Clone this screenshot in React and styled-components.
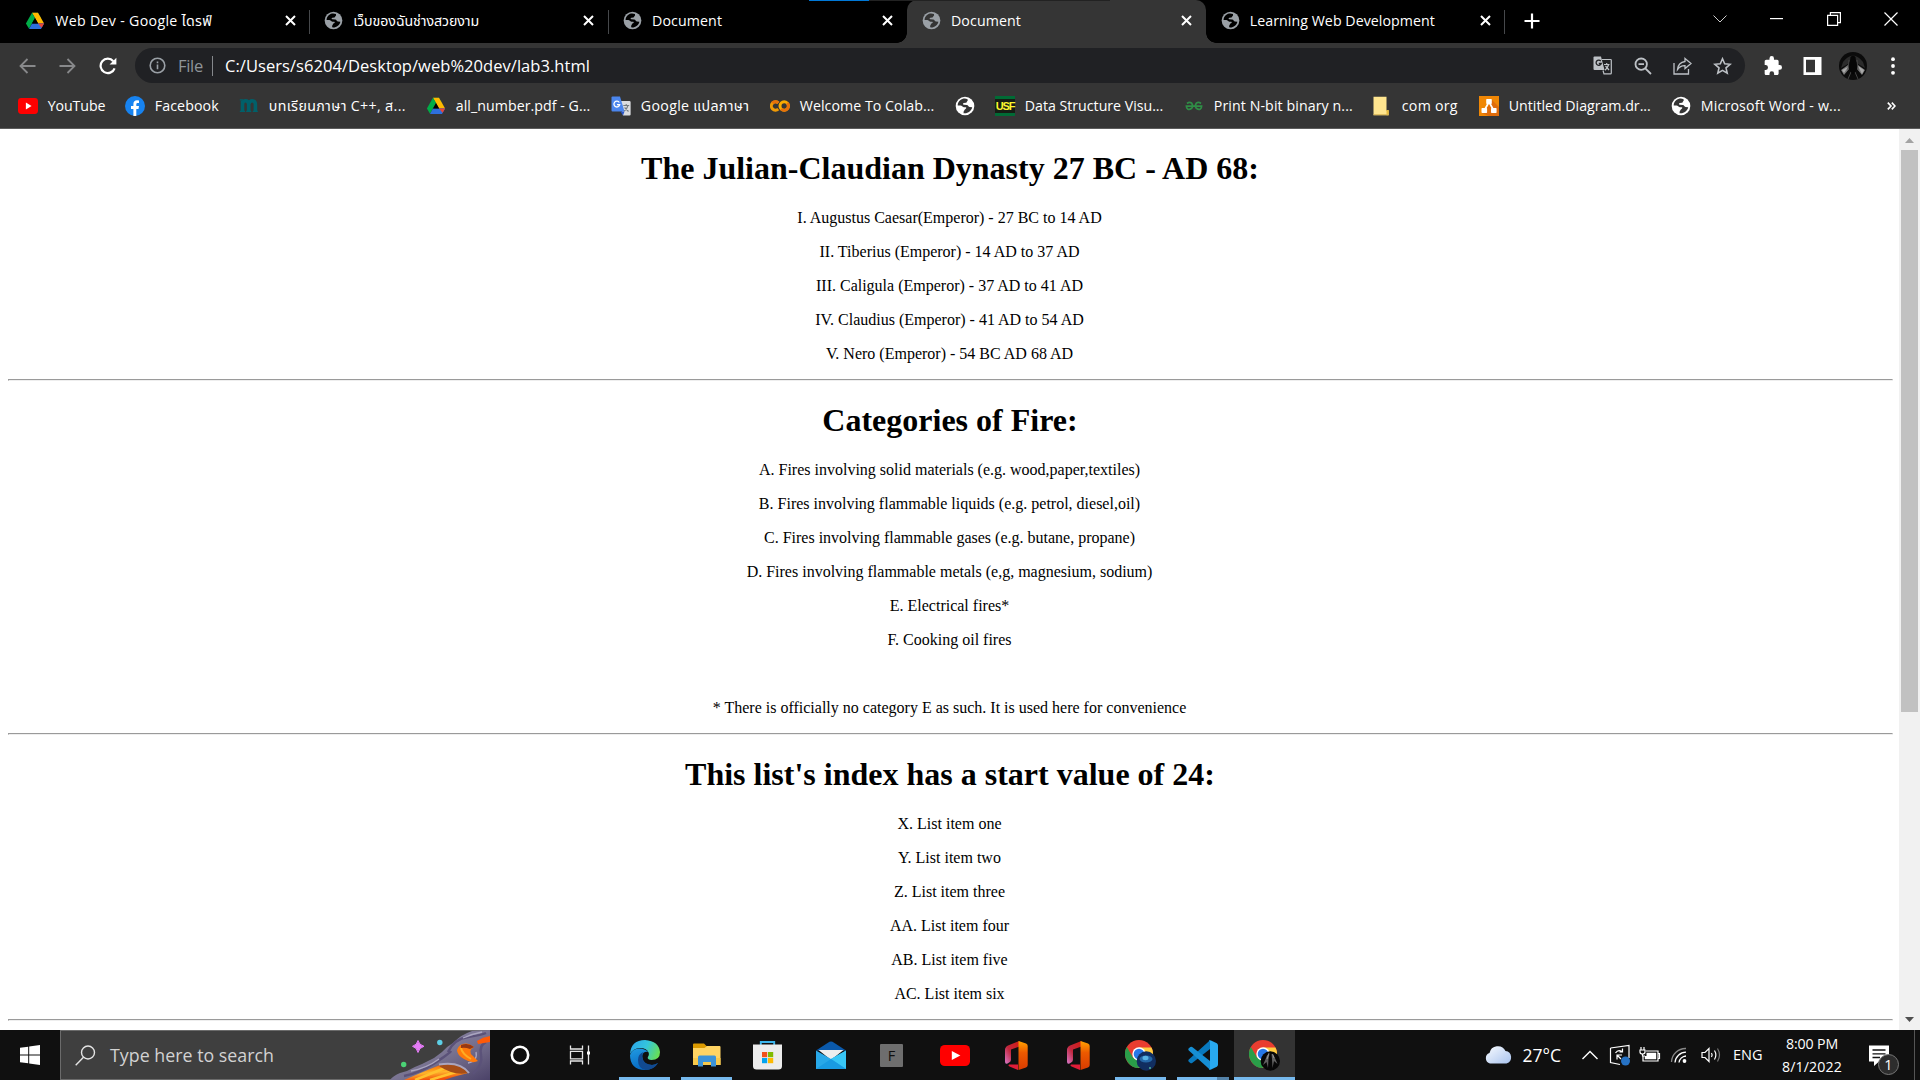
import React, { useLayoutEffect, useRef } from "react";
import styled, { createGlobalStyle, css } from "styled-components";

const GlobalStyle = createGlobalStyle`
  html, body { margin: 0; padding: 0; height: 1080px; overflow: hidden; background: #fff; }
  svg { display: block; flex: none; }
`;

const uiFont = `"Open Sans", "Noto Sans", "Noto Sans Thai", sans-serif`;

const Screen = styled.div`
  width: 1920px;
  height: 1080px;
  display: flex;
  flex-direction: column;
  overflow: hidden;
  font-family: ${uiFont};
  color: #fff;
`;

/* ---------- text with a set line length ---------- */
const LabelText = styled.span`
  display: inline-block;
  flex: none;
  white-space: nowrap;
  font-size: ${(p) => p.$size || 14.2}px;
  color: ${(p) => p.$color || "#fff"};
  line-height: 20px;
`;

function Label({ w, size, color, children }) {
  const ref = useRef(null);
  useLayoutEffect(() => {
    const el = ref.current;
    el.style.letterSpacing = "0px";
    const base = el.getBoundingClientRect().width;
    el.style.letterSpacing = "1px";
    const slope = el.getBoundingClientRect().width - base;
    el.style.letterSpacing = slope > 0 ? `${(w - base) / slope}px` : "0px";
  }, [w, children]);
  return (
    <LabelText ref={ref} $size={size} $color={color}>
      {children}
    </LabelText>
  );
}

/* ---------- icons ---------- */
const Globe = ({ size = 19, color = "#9aa0a6", cut = "#000" }) => (
  <svg width={size} height={size} viewBox="0 0 20 20">
    <circle cx="10" cy="10" r="9.3" fill={color} />
    <path
      d="M8.6 2.6C5 3.4 2.8 6.300 2.700 9.500L5.500 9.600C7 9.800 7.300 11 8.800 11.200L10.800 11.300C11.600 11.500 11.400 12.600 10.500 12.900C9.400 13.200 9.500 14.500 8.700 15.200L8.500 17.200C12.800 17.800 16.600 14.800 17.200 11.200L14.500 11C13.200 10.600 13.400 9 11.800 8.900L8.800 8.800C7.700 8.600 7.800 7.300 8.900 7.100L11 6.800C12 6.300 11.700 5.200 12.700 4.700L12.600 3.200C11.300 2.600 9.900 2.400 8.600 2.600Z"
      fill={cut}
    />
  </svg>
);

const Drive = () => (
  <svg width="20" height="20" viewBox="0 0 20 20">
    <path d="M7 1.800H13L16 7L10 7Z" fill="#188038" />
    <path d="M10 1.800H13L19.100 12.400H13.100L7 1.800Z" fill="#ffba00" />
    <path d="M0.900 12.500L7 1.800L10 7L4 17.800Z" fill="#00ac47" />
    <path d="M7 12.400H19.100L16 17.900H4Z" fill="#2d6fdd" />
    <path d="M13 12.400H19.100L16.600 16.800Z" fill="#ea4335" />
    <path d="M10 7L7 12.400H13.100Z" fill="#000" />
  </svg>
);

const YouTube = ({ w = 20, h = 16 }) => (
  <svg width={w} height={h} viewBox="0 0 28 21" preserveAspectRatio="none">
    <rect width="28" height="21" rx="4.500" fill="#f00" />
    <path d="M11 6L19 10.500L11 15Z" fill="#fff" />
  </svg>
);

const Facebook = () => (
  <svg width="20" height="20" viewBox="0 0 20 20">
    <circle cx="10" cy="10" r="10" fill="#1783f0" />
    <path d="M8.400 20V13H6V10H8.400V8C8.400 5.400 9.900 4.200 12 4.200L14 4.400V6.900H12.800C11.600 6.900 11.300 7.500 11.300 8.300V10H14L13.500 13H11.300V20Z" fill="#fff" />
  </svg>
);

const LetterM = () => (
  <svg width="20" height="20" viewBox="0 0 20 20" fill="none" stroke="#00606a" strokeWidth="3.600">
    <path d="M3.500 16V4.500M3.300 8Q4 4.800 6.600 4.800T9.700 8V16M9.700 8Q10.600 4.800 13.300 4.800T16.400 8V16" />
    <path d="M0.800 15.400H6M7.200 15.400H12.200M13.800 15.400H18.800M0.800 3.800H4" strokeWidth="1.300" />
  </svg>
);

const Translate = () => (
  <svg width="20" height="20" viewBox="0 0 20 20">
    <path d="M8 5H18.500Q19.600 5 19.600 6V18.500Q19.600 19.600 18.500 19.600H12Z" fill="#dadce0" />
    <path d="M1.500 0.600H9L13.500 15.600H1.500Q0.500 15.600 0.500 14.600V1.600Q0.500 0.600 1.500 0.600Z" fill="#4b86ee" />
    <path d="M9.500 15.600H13.500L12 19.600Z" fill="#2a56c6" />
    <path d="M8.300 6.500A2.900 2.900 0 1 0 8.700 8.600H6" fill="none" stroke="#fff" strokeWidth="1.300" />
    <path d="M12.300 9.500H18.200M15.200 8V9.500M17 9.500Q16 13 13.300 15M13.600 11.500L17.500 15.500" fill="none" stroke="#737b80" strokeWidth="1.100" />
  </svg>
);

const Colab = () => (
  <svg width="20" height="20" viewBox="0 0 20 20" fill="none" strokeWidth="3">
    <path d="M8.300 6.800A4.200 4.200 0 1 0 8.300 13.200" stroke="#f09a05" />
    <path d="M2.300 7A4.200 4.200 0 0 1 8.300 6.800" stroke="#e8710a" />
    <circle cx="14.200" cy="10" r="4.200" stroke="#f9ab00" />
    <path d="M11.200 13A4.200 4.200 0 0 0 17.200 7" stroke="#e8710a" />
  </svg>
);

const UsfBox = styled.div`
  width: 20px;
  height: 20px;
  flex: none;
  box-sizing: border-box;
  border: solid #006b35;
  border-width: 3px 0;
  background: #161d14;
  color: #fdf52f;
  display: flex;
  align-items: center;
  justify-content: center;
  font: bold 11px/14px "Liberation Sans Narrow", "Liberation Sans", sans-serif;
  letter-spacing: -1.2px;
`;

const Gfg = () => (
  <svg width="20" height="20" viewBox="0 0 20 20" fill="none" stroke="#2f8d46" strokeWidth="1.700">
    <path d="M3 7.500Q5.500 5.600 7.700 7.200Q9.400 9.500 8 11.900Q6 14.200 3.600 12.900Q2.500 12 2.400 10.200H17.600Q17.500 12 16.400 12.900Q14 14.200 12 11.900Q10.600 9.500 12.300 7.200Q14.500 5.600 17 7.500" />
  </svg>
);

const BookmarkFolder = () => (
  <svg width="20" height="20" viewBox="0 0 20 20">
    <path d="M1.500 0.800H14.500V14.500H16.500V19.200H1.500Z" fill="#ffe58f" />
    <path d="M14.500 14H16.800V19.200H14.500Z" fill="#e7bb3f" />
    <path d="M1.500 18.700H16.500" stroke="#d8b557" />
  </svg>
);

const Diagram = () => (
  <svg width="20" height="20" viewBox="0 0 20 20">
    <rect width="20" height="20" fill="#f08705" />
    <path d="M13 4L20 11V20H10L2.500 17L10 9Z" fill="#df6c0c" />
    <path d="M10 6L5.500 14M10 6L14.500 14" stroke="#fff" strokeWidth="1.700" />
    <rect x="7.200" y="3" width="5.600" height="5" rx="0.700" fill="#fff" />
    <rect x="2.500" y="12" width="5.600" height="5" rx="0.700" fill="#fff" />
    <rect x="12" y="12" width="5.600" height="5" rx="0.700" fill="#fff" />
  </svg>
);

/* ---------- tab strip ---------- */
const TabStrip = styled.div`
  position: relative;
  height: 43px;
  flex: none;
  background: #000;
  display: flex;
  padding-left: 10px;
`;

const TopProgress = styled.div`
  position: absolute;
  left: 809px;
  top: 0;
  width: 301px;
  height: 1px;
  background: linear-gradient(90deg, #0078d7 60px, #222 60px);
`;

const Tab = styled.div`
  position: relative;
  box-sizing: border-box;
  width: 298.900px;
  height: 43px;
  padding: 0 12px 2px 15px;
  display: flex;
  align-items: center;
  gap: 10.300px;
  ${(p) =>
    p.$divider &&
    css`
      &::before {
        content: "";
        position: absolute;
        right: -1px;
        top: 10px;
        width: 1px;
        height: 24px;
        background: #46484b;
      }
    `}
  ${(p) =>
    p.$active &&
    css`
      background: #353535;
      border-radius: 10px 10px 0 0;
      &::before,
      &::after {
        content: "";
        position: absolute;
        bottom: 0;
        width: 10px;
        height: 10px;
      }
      &::before {
        left: -10px;
        background: radial-gradient(circle at 0 0, transparent 9.500px, #353535 10px);
      }
      &::after {
        right: -10px;
        background: radial-gradient(circle at 100% 0, transparent 9.500px, #353535 10px);
      }
    `}
`;

const TabClose = styled.div`
  margin-left: auto;
  padding-right: 1.300px;
`;

const CloseGlyph = () => (
  <svg width="11" height="11" viewBox="0 0 11 11" stroke="#fff" strokeWidth="2">
    <path d="M1 1L10 10M10 1L1 10" />
  </svg>
);

const NewTab = styled.div`
  width: 56px;
  display: flex;
  align-items: center;
  justify-content: center;
  padding-bottom: 1px;
`;

const WindowButtons = styled.div`
  margin-left: auto;
  display: grid;
  grid-template-columns: 57px 57px 57px 58px;
  height: 37px;
  align-items: center;
  justify-items: center;
`;

const tabs = [
  { title: "Web Dev - Google ไดรฟ์", w: 157, drive: true },
  { title: "เว็บของฉันช่างสวยงาม", w: 126, divider: true },
  { title: "Document", w: 70 },
  { title: "Document", w: 70, active: true },
  { title: "Learning Web Development", w: 185, divider: true },
];

function Tabs() {
  return (
    <TabStrip>
      {tabs.map((t, i) => (
        <Tab key={i} $active={t.active} $divider={t.divider || i === 0}>
          {t.drive ? <Drive /> : <Globe cut={t.active ? "#353535" : "#000"} />}
          <Label w={t.w}>{t.title}</Label>
          <TabClose>
            <CloseGlyph />
          </TabClose>
        </Tab>
      ))}
      <NewTab>
        <svg width="16" height="16" viewBox="0 0 16 16" stroke="#fff" strokeWidth="2.200">
          <path d="M8 0.500V15.500M0.500 8H15.500" />
        </svg>
      </NewTab>
      <WindowButtons>
        <svg width="14" height="8" viewBox="0 0 14 8" fill="none" stroke="#ccc" strokeWidth="1">
          <path d="M0.500 0.500L7 7L13.500 0.500" />
        </svg>
        <svg width="13" height="2" viewBox="0 0 13 2">
          <rect width="13" height="1.200" fill="#fff" />
        </svg>
        <svg width="14" height="14" viewBox="0 0 14 14" fill="none" stroke="#fff" strokeWidth="1.200">
          <path d="M0.600 3.400H10.600V13.400H0.600ZM3.400 3.400V0.600H13.400V10.600H10.600" />
        </svg>
        <svg width="14" height="14" viewBox="0 0 14 14" stroke="#fff" strokeWidth="1.200">
          <path d="M0.500 0.500L13.500 13.500M13.500 0.500L0.500 13.500" />
        </svg>
      </WindowButtons>
      <TopProgress />
    </TabStrip>
  );
}

/* ---------- toolbar ---------- */
const Toolbar = styled.div`
  height: 45px;
  flex: none;
  background: #353535;
  display: flex;
  align-items: center;
`;

const NavButtons = styled.div`
  width: 135px;
  box-sizing: border-box;
  padding-left: 7.500px;
  display: grid;
  grid-template-columns: repeat(3, 40px);
  justify-items: center;
  align-items: center;
`;

const Omnibox = styled.div`
  width: 1610px;
  height: 35px;
  box-sizing: border-box;
  border-radius: 18px;
  background: #202124;
  display: flex;
  align-items: center;
  padding: 0 2px 0 14px;
`;

const SchemeChip = styled.div`
  display: flex;
  align-items: center;
  gap: 12px;
  padding-right: 9px;
  border-right: 1px solid #85888c;
  height: 20px;
  margin-right: 12px;
`;

const OmniActions = styled.div`
  margin-left: auto;
  display: grid;
  grid-template-columns: repeat(4, 40.200px);
  justify-items: center;
  align-items: center;
`;

const ToolbarActions = styled.div`
  flex: 1;
  padding-left: 7.500px;
  display: grid;
  grid-template-columns: repeat(4, 40.200px);
  justify-items: center;
  align-items: center;
`;

function AddressBar() {
  return (
    <Toolbar>
      <NavButtons>
        <svg width="17" height="16" viewBox="0 0 17 16" fill="none" stroke="#88898b" strokeWidth="1.800">
          <path d="M8.500 1L1.500 8L8.500 15M1.500 8H16.500" />
        </svg>
        <svg width="17" height="16" viewBox="0 0 17 16" fill="none" stroke="#88898b" strokeWidth="1.800">
          <path d="M8.500 1L15.500 8L8.500 15M15.500 8H0.500" />
        </svg>
        <svg width="18" height="18" viewBox="0 0 18 18" fill="none" stroke="#fff" strokeWidth="2.200">
          <path d="M15.600 11.300A7.200 7.200 0 1 1 14.300 4.200" />
          <path d="M17.400 0.800V7.600H10.600Z" fill="#fff" stroke="none" />
        </svg>
      </NavButtons>
      <Omnibox>
        <SchemeChip>
          <svg width="17" height="17" viewBox="0 0 17 17" fill="none" stroke="#9aa0a6" strokeWidth="1.600">
            <circle cx="8.500" cy="8.500" r="7.300" />
            <path d="M8.500 7.500V12.300M8.500 4.500V6.200" />
          </svg>
          <Label w={25} size={16.5} color="#8f9499">File</Label>
        </SchemeChip>
        <Label w={365} size={16.5}>C:/Users/s6204/Desktop/web%20dev/lab3.html</Label>
        <OmniActions>
          <svg width="19" height="19" viewBox="0 0 19 19">
            <path d="M1.500 0.500H8L11.500 14H1.500Q0.500 14 0.500 13V1.500Q0.500 0.500 1.500 0.500Z" fill="#bdc1c6" />
            <path d="M9 3.500H17.500Q18.300 3.500 18.300 4.300V17Q18.300 17.900 17.500 17.900H11L10 14.500" fill="none" stroke="#bdc1c6" strokeWidth="1.200" />
            <path d="M7.800 5.200A2.600 2.600 0 1 0 8.200 7.500H5.800" fill="none" stroke="#202124" strokeWidth="1.300" />
            <path d="M11 8.500H16.500M13.700 7V8.500M15.600 8.500Q14.800 12 12 14.200M12.500 10L16 14" fill="none" stroke="#bdc1c6" strokeWidth="1.200" />
          </svg>
          <svg width="18" height="18" viewBox="0 0 18 18" fill="none" stroke="#bdc1c6" strokeWidth="1.800">
            <circle cx="7.200" cy="7.200" r="5.700" />
            <path d="M11.300 11.300L17 17M4.500 7.200H10" />
          </svg>
          <svg width="19" height="18" viewBox="0 0 19 18" fill="none" stroke="#bdc1c6" strokeWidth="1.300">
            <path d="M1 6V17H15.500V12" />
            <path d="M12 1.500L18 6.500L12 11.500V8.600Q7.500 8.300 4.500 12.500Q5.200 5.500 12 4.500Z" />
          </svg>
          <svg width="19" height="18" viewBox="0 0 19 18" fill="none" stroke="#bdc1c6" strokeWidth="1.600">
            <path d="M9.500 1.800L11.700 6.800L17.100 7.300L13 10.900L14.200 16.200L9.500 13.400L4.800 16.200L6 10.900L1.900 7.300L7.300 6.800Z" />
          </svg>
        </OmniActions>
      </Omnibox>
      <ToolbarActions>
        <svg width="18" height="19" viewBox="0 0 24 24" preserveAspectRatio="none" fill="#fff">
          <path d="M21 11.500h-1.500V7c0-1.200-.9-2.200-2-2.200h-4.200V3a3 3 0 0 0-6 0v1.800H3C1.800 4.800.9 5.800.9 7v4.300h1.700a3.300 3.300 0 0 1 0 6.500H.9V22c0 1.200 1 2 2.100 2h4.300v-1.600a3.100 3.100 0 0 1 6.200 0V24h4c1.200 0 2-.9 2-2v-4.500H21a3 3 0 0 0 0-6z" />
        </svg>
        <svg width="19" height="18" viewBox="0 0 19 18">
          <path fillRule="evenodd" d="M0.500 0H18.500V18H0.500ZM3 2.800V15.200H12V2.800Z" fill="#fff" />
        </svg>
        <svg width="28" height="28" viewBox="0 0 28 28">
          <defs>
            <clipPath id="profile"><circle cx="14" cy="14" r="14" /></clipPath>
          </defs>
          <g clipPath="url(#profile)">
            <rect width="28" height="28" fill="#0b0b0b" />
            <path d="M4 10Q14 -3 24 10L26 16L19 12L14 5L9 12L2 16Z" fill="#2b2b2b" />
            <path d="M2 18L9 13L10 17L5 23ZM26 18L19 13L18 17L23 23Z" fill="#777" />
            <path d="M3 18L9 15L5 21ZM25 18L19 14L23 22Z" fill="#aaa" />
            <path d="M10 8L9 18M18 8L19 18M12 20L9 27M16 20L19 27" stroke="#444" fill="none" />
            <path d="M11.500 5Q14 2 16.500 5L18 17L14 23L10 17Z" fill="#060606" />
          </g>
        </svg>
        <svg width="4" height="18" viewBox="0 0 4 18" fill="#fff">
          <circle cx="2" cy="2.200" r="1.900" />
          <circle cx="2" cy="9" r="1.900" />
          <circle cx="2" cy="15.800" r="1.900" />
        </svg>
      </ToolbarActions>
    </Toolbar>
  );
}

/* ---------- bookmarks ---------- */
const BookmarkBar = styled.div`
  height: 41px;
  flex: none;
  box-sizing: border-box;
  border-bottom: 1px solid #5c5c5c;
  background: #353535;
  display: flex;
  align-items: center;
  padding: 0 0 4px 18px;
`;

const Bookmark = styled.div`
  width: ${(p) => p.$slot}px;
  flex: none;
  display: flex;
  align-items: center;
  gap: 9.800px;
`;

const bookmarks = [
  { icon: <YouTube />, label: "YouTube", slot: 107, w: 57.5 },
  { icon: <Facebook />, label: "Facebook", slot: 114, w: 64 },
  { icon: <LetterM />, label: "บทเรียนภาษา C++, ส...", slot: 187, w: 137 },
  { icon: <Drive />, label: "all_number.pdf - G...", slot: 185, w: 134.5 },
  { icon: <Translate />, label: "Google แปลภาษา", slot: 159, w: 108.5 },
  { icon: <Colab />, label: "Welcome To Colab...", slot: 185, w: 134.5 },
  { icon: <Globe size={20} color="#fff" cut="#353535" />, slot: 40 },
  { icon: <UsfBox>USF</UsfBox>, label: "Data Structure Visu...", slot: 189, w: 138.5 },
  { icon: <Gfg />, label: "Print N-bit binary n...", slot: 188, w: 139 },
  { icon: <BookmarkFolder />, label: "com org", slot: 107, w: 56 },
  { icon: <Diagram />, label: "Untitled Diagram.dr...", slot: 192, w: 142 },
  { icon: <Globe size={20} color="#fff" cut="#353535" />, label: "Microsoft Word - w...", slot: 215.5, w: 140 },
];

function Bookmarks() {
  return (
    <BookmarkBar>
      {bookmarks.map((b, i) => (
        <Bookmark key={i} $slot={b.slot}>
          {b.icon}
          {b.label && <Label w={b.w}>{b.label}</Label>}
        </Bookmark>
      ))}
      <svg width="9" height="8" viewBox="0 0 9 8" fill="none" stroke="#fff" strokeWidth="1.600">
        <path d="M0.800 0.600L4 4L0.800 7.400M4.800 0.600L8 4L4.800 7.400" />
      </svg>
    </BookmarkBar>
  );
}

/* ---------- web page ---------- */
const Viewport = styled.div`
  height: 901px;
  flex: none;
  display: flex;
  background: #fff;
  overflow: hidden;
`;

const Document = styled.main`
  width: 1899px;
  box-sizing: border-box;
  padding: 0 6px 0 8px;
  text-align: center;
  color: #000;
  font: 16px/18px "Liberation Serif", "Times New Roman", serif;
  overflow: hidden;
`;

const Heading = styled.h1`
  margin: 21.440px 0;
  padding-right: 1px;
  font-size: 32px;
  line-height: 37px;
  font-weight: bold;
`;

const Item = styled.p`
  margin: 16px 0;
  padding-right: 2px;
  min-height: 18px;
`;

const Rule = styled.hr`
  margin: 0;
  height: 2px;
  box-sizing: border-box;
  border: 1px solid;
  border-color: #9a9a9a #eeeeee #eeeeee #9a9a9a;
`;

const Scrollbar = styled.div`
  width: 21px;
  box-sizing: border-box;
  background: #f1f1f1;
  display: flex;
  flex-direction: column;
  align-items: center;
  justify-content: space-between;
  padding: 9px 1px 8px 0;
`;

const Thumb = styled.div`
  width: 17px;
  height: 562px;
  background: #c1c1c1;
  margin: 7px 0 auto 1px;
`;

const sections = [
  {
    title: "The Julian-Claudian Dynasty 27 BC - AD 68:",
    items: [
      "I. Augustus Caesar(Emperor) - 27 BC to 14 AD",
      "II. Tiberius (Emperor) - 14 AD to 37 AD",
      "III. Caligula (Emperor) - 37 AD to 41 AD",
      "IV. Claudius (Emperor) - 41 AD to 54 AD",
      "V. Nero (Emperor) - 54 BC AD 68 AD",
    ],
  },
  {
    title: "Categories of Fire:",
    items: [
      "A. Fires involving solid materials (e.g. wood,paper,textiles)",
      "B. Fires involving flammable liquids (e.g. petrol, diesel,oil)",
      "C. Fires involving flammable gases (e.g. butane, propane)",
      "D. Fires involving flammable metals (e,g, magnesium, sodium)",
      "E. Electrical fires*",
      "F. Cooking oil fires",
      "",
      "* There is officially no category E as such. It is used here for convenience",
    ],
  },
  {
    title: "This list's index has a start value of 24:",
    items: [
      "X. List item one",
      "Y. List item two",
      "Z. List item three",
      "AA. List item four",
      "AB. List item five",
      "AC. List item six",
    ],
  },
];

function WebPage() {
  return (
    <Viewport>
      <Document>
        {sections.map((s) => (
          <section key={s.title}>
            <Heading>{s.title}</Heading>
            {s.items.map((t, i) => (
              <Item key={i}>{t}</Item>
            ))}
            <Rule />
          </section>
        ))}
      </Document>
      <Scrollbar>
        <svg width="9" height="5" viewBox="0 0 9 5"><path d="M0 5L4.500 0L9 5Z" fill="#a3a3a3" /></svg>
        <Thumb />
        <svg width="9" height="5" viewBox="0 0 9 5"><path d="M0 0L4.500 5L9 0Z" fill="#505050" /></svg>
      </Scrollbar>
    </Viewport>
  );
}

/* ---------- taskbar ---------- */
const Taskbar = styled.div`
  height: 50px;
  flex: none;
  background: #101010;
  display: flex;
`;

const StartButton = styled.div`
  width: 60px;
  display: flex;
  align-items: center;
  justify-content: center;
`;

const SearchBox = styled.div`
  width: 430px;
  box-sizing: border-box;
  border: 1px solid #6b6b6b;
  border-right: 0;
  background: #3f3f3f;
  display: flex;
  align-items: center;
  padding-left: 14px;
  gap: 14px;
`;

const SearchArt = styled.div`
  margin: -1px 0 -1px auto;
`;

const TaskButton = styled.div`
  box-sizing: border-box;
  position: relative;
  width: ${(p) => p.$slot || 62}px;
  height: 50px;
  flex: none;
  display: flex;
  align-items: center;
  justify-content: center;
  ${(p) =>
    p.$active &&
    css`
      background: #333;
    `}
  &::after {
    content: "";
    position: absolute;
    bottom: 0;
    left: ${(p) => (p.$active ? 0 : 5.5)}px;
    right: ${(p) => (p.$active ? 0 : 5.5)}px;
    height: 3px;
    background: ${(p) =>
      p.$stacked
        ? "linear-gradient(90deg, #76b9ed 40px, #5482a8 40px)"
        : p.$active || p.$open
        ? "#76b9ed"
        : "transparent"};
  }
`;

const Tray = styled.div`
  margin-left: auto;
  width: 436px;
  height: 48px;
  display: grid;
  grid-template-columns: 38.500px 49.500px 37px 30px 31px 31px 32px 43px 60px 78px 6px;
  align-items: center;
`;

const Clock = styled.div`
  display: flex;
  flex-direction: column;
  align-items: center;
  gap: 3px;
  padding: 1px 0 0 3px;
  width: 66px;
`;

const Notice = styled.div`
  padding: 10px 0 0 31.500px;
`;

const ShowDesktop = styled.div`
  height: 50px;
  align-self: start;
  border-left: 1px solid #555;
`;

const FileTile = styled.div`
  width: 23px;
  height: 23px;
  border-radius: 1px;
  background: #6e6e6e;
  color: #101010;
  display: flex;
  align-items: center;
  justify-content: center;
  margin-right: 2px;
  font: 500 14.5px/23px ${uiFont};
`;

const Lava = () => (
  <svg width="100" height="50" viewBox="0 0 100 50">
    <defs>
      <linearGradient id="rock" x1="0" y1="0" x2="1" y2="1">
        <stop offset="0.200" stopColor="#8c87a8" />
        <stop offset="0.550" stopColor="#77718f" />
        <stop offset="1" stopColor="#4b4268" />
      </linearGradient>
      <linearGradient id="lava" x1="0" y1="0" x2="0.300" y2="1">
        <stop offset="0" stopColor="#e8480c" />
        <stop offset="0.450" stopColor="#ff9a16" />
        <stop offset="0.600" stopColor="#ffb52c" />
        <stop offset="1" stopColor="#f2500c" />
      </linearGradient>
    </defs>
    <path d="M0 50Q3 46 10 43L17 41Q24 37 32 34L44 28L52 22Q56 17 63 13Q72 4 82 1L100 0V50Z" fill="url(#rock)" />
    <path d="M14 46Q30 43 45 33T61 21M58 22Q64 9 78 7T96 3M83 44Q93 35 91 25Q89 15 96 12" fill="none" stroke="#5b5279" strokeWidth="2.500" />
    <path d="M21 41Q37 38 49 29M73 8Q82 4 92 2M78 33Q88 31 86 22" fill="none" stroke="#aaa6c0" strokeWidth="1.300" />
    <path d="M14 50L40 39L50 35Q69 32 78 43L63 47L54 50Z" fill="url(#lava)" />
    <path d="M25 50L55 38M40 50L66 42" stroke="#ffc12e" strokeWidth="2.500" />
    <path d="M50 35Q70 32 78 43Q64 46 49 36Z" fill="#a64d17" />
    <path d="M49 34.500Q70 31 79 43" fill="none" stroke="#aaa5bd" strokeWidth="2" />
    <path d="M67 20Q70 12 79 14L84 17Q77 21 83 26L88 31Q82 34 74 29Q67 25 67 20Z" fill="#ff7a0c" />
    <path d="M71 18Q72 24 81 29" fill="none" stroke="#ffad23" strokeWidth="2" />
    <path d="M71 15Q78 12 84 17L80 19Q75 17 71 18Z" fill="#963813" />
    <path d="M87 11Q93 7 100 6V12L88 14Z" fill="#ff5a08" />
    <path d="M28 10.500Q29 15 34 16.300Q29 17.600 28 22.500Q27 17.600 22.500 16.300Q27 15 28 10.500Z" fill="#e57cf7" stroke="#e57cf7" strokeWidth="1" />
    <circle cx="49.800" cy="12.500" r="2.700" fill="#5ccfe6" />
    <circle cx="13.700" cy="34.500" r="2.700" fill="#4bd275" />
  </svg>
);

const Edge = () => (
  <svg width="30" height="30" viewBox="0 0 30 30">
    <defs>
      <linearGradient id="edgeTop" x1="0" y1="0.300" x2="1" y2="0.600">
        <stop offset="0" stopColor="#2ba6ea" />
        <stop offset="0.500" stopColor="#34c5dc" />
        <stop offset="1" stopColor="#68e052" />
      </linearGradient>
      <linearGradient id="edgeLeft" x1="0" y1="0" x2="0.400" y2="1">
        <stop offset="0" stopColor="#219be2" />
        <stop offset="1" stopColor="#0668c2" />
      </linearGradient>
    </defs>
    <path d="M0 14Q1 0 15 0Q29 1 30 12Q30 20 21.500 20Q17.500 19.500 17.700 17.500Q19.500 15.500 18.800 13Q17 8 10 8Q3 8.500 0 14Z" fill="url(#edgeTop)" />
    <path d="M0 15Q2 8.500 9.500 8.500Q15 8.500 18.300 12Q13 11 12.200 16Q12.200 25 22 25Q25 25 28 23Q23 30 15 30Q0 29.500 0 15Z" fill="url(#edgeLeft)" />
    <path d="M8 20Q8 14 13.500 12Q11.500 14 12.200 17.500Q14 24.500 22 25Q25 25 28 23Q24 30 15.500 30Q8 28.500 8 20Z" fill="#114a91" />
  </svg>
);

const Explorer = () => (
  <svg width="28" height="24" viewBox="0 0 28 24">
    <path d="M0 1.500Q0 0.500 1 0.500H11L13.500 3H27V8H0Z" fill="#dc9a00" />
    <path d="M0 5H11.500L14 3H26.500Q27.500 3 27.500 4V22H0Z" fill="#ffd463" />
    <path d="M0 15H27.500V22H0Z" fill="#f7c84b" />
    <path d="M5 23.500V14Q5 12.500 6.500 12.500H21.500Q23 12.500 23 14V23.500H18V19H10V23.500Z" fill="#3c93d8" />
  </svg>
);

const Store = () => (
  <svg width="31" height="30" viewBox="0 0 31 30">
    <path d="M7.800 6.500V2H21.200V6.500" fill="none" stroke="#3cb5ec" strokeWidth="1.900" />
    <path d="M0 4.500H29V26Q29 29.500 25.500 29.500H3.500Q0 29.500 0 26Z" fill="#ececec" />
    <rect x="9" y="12" width="5.200" height="5.200" fill="#f1511b" />
    <rect x="15" y="12" width="5.200" height="5.200" fill="#80bb01" />
    <rect x="9" y="18" width="5.200" height="5.200" fill="#02a4ef" />
    <rect x="15" y="18" width="5.200" height="5.200" fill="#fdb902" />
  </svg>
);

const Mail = () => (
  <svg width="30" height="28" viewBox="0 0 30 28">
    <path d="M0 9.500L13.500 0.800Q15 0 16.500 0.800L30 9.500Z" fill="#0a59ab" />
    <path d="M2.500 9H27.500L15 19Z" fill="#eee" />
    <path d="M0 9.500L15 18L30 9.500V28H0Z" fill="#28a8e8" />
    <path d="M15 18L30 9.500V28Z" fill="#38c6f5" />
    <path d="M0 28L15 18L30 28Z" fill="#199be2" />
  </svg>
);

const Office = () => (
  <svg width="26" height="29" viewBox="0 0 26 29">
    <defs>
      <linearGradient id="officeRight" x1="0" y1="0" x2="0" y2="1">
        <stop offset="0" stopColor="#ffa300" />
        <stop offset="0.400" stopColor="#ed5a00" />
        <stop offset="1" stopColor="#d83b01" />
      </linearGradient>
      <linearGradient id="officeLeft" x1="1" y1="0" x2="0" y2="1">
        <stop offset="0" stopColor="#d11b12" />
        <stop offset="0.550" stopColor="#c2273d" />
        <stop offset="1" stopColor="#d879cb" />
      </linearGradient>
    </defs>
    <path d="M15.500 0L4 4.500Q1 6 1 9V20.500Q1 23.500 3.500 22.500L5.500 21.300Q7 20.500 7 18.500V8.500L15.500 5.500Z" fill="url(#officeLeft)" />
    <path d="M5 23.500L14 23.500V29L5.500 25.600Q3.500 24.500 5 23.500Z" fill="#e11d38" />
    <path d="M14.500 0L22 2.500Q23.700 3.200 23.700 5V24Q23.700 25.800 22 26.500L14.500 29Z" fill="url(#officeRight)" />
  </svg>
);

const Chrome = ({ dark }) => (
  <svg width="31" height="32" viewBox="0 0 31 32">
    <circle cx="14" cy="15" r="14" fill="#e93d30" />
    <path d="M1.900 8L8 18.500L14 22L17.500 28.500A14 14 0 0 1 1.900 8Z" fill="#2a9e49" />
    <path d="M14 8.600H26.500A14 14 0 0 1 13.500 29L20 18.500Z" fill="#ffcd40" />
    <circle cx="14" cy="15" r="6.700" fill="#fff" />
    <circle cx="14" cy="15" r="5.300" fill="#2778e8" />
    <circle cx="21.300" cy="22" r="9.700" fill={dark ? "#080808" : "#112e60"} />
    {dark ? (
      <g>
        <path d="M14 26L17 19Q18 15 20.500 15L19.500 20L19 29L17.500 23ZM28.500 25L25.500 18Q24.500 15 22.500 15L23 20L23.500 29L25 22Z" fill="#777" opacity=".8" />
        <path d="M20 14L18 20M23.500 15L25 19" stroke="#bbb" opacity=".6" />
      </g>
    ) : (
      <g>
        <ellipse cx="21" cy="20" rx="6.500" ry="3.500" fill="#2568a8" />
        <ellipse cx="20.500" cy="19" rx="3" ry="2.200" fill="#58b4e4" />
        <circle cx="25" cy="29" r="1" fill="#55b79a" />
      </g>
    )}
  </svg>
);

const VsCode = () => (
  <svg width="30" height="30" viewBox="0 0 30 30">
    <path d="M22 0.300L0.800 19.500Q-0.200 20.600 0.800 21.700L2.300 23Q3.200 23.600 4.200 23L22 9Z" fill="#0879be" />
    <path d="M22 29.700L0.800 10.500Q-0.200 9.400 0.800 8.300L2.300 7Q3.200 6.400 4.200 7L22 21Z" fill="#168fd5" />
    <path d="M21 29.600Q22 29.900 23 29.500L28.800 26.700Q30 26 30 24.500V5.500Q30 4 28.800 3.300L23 0.500Q22 0.100 21 0.400L22 2V28Z" fill="#28a9f0" />
  </svg>
);

const Cortana = () => (
  <svg width="20" height="20" viewBox="0 0 20 20">
    <circle cx="10" cy="10" r="8.200" fill="none" stroke="#fff" strokeWidth="2.600" />
  </svg>
);

const TaskView = () => (
  <svg width="25" height="20" viewBox="0 0 25 20" fill="none" stroke="#e8e8e8" strokeWidth="1.300">
    <path d="M1.500 0.500V4H13.500V0.500M1.500 19.500V16H13.500V19.500M1.500 6.300H13.500V13.800H1.500ZM19.500 0.500V19.500" />
    <rect x="18" y="6.500" width="3" height="3" fill="#fff" stroke="none" />
  </svg>
);

const apps = [
  { icon: <Cortana />, slot: 60 },
  { icon: <TaskView />, slot: 63.5 },
  { icon: <Edge />, open: true },
  { icon: <Explorer />, open: true },
  { icon: <Store /> },
  { icon: <Mail /> },
  { icon: <FileTile>F</FileTile> },
  { icon: <YouTube w={30} h={21} /> },
  { icon: <Office /> },
  { icon: <Office /> },
  { icon: <Chrome />, open: true },
  { icon: <VsCode />, open: true, stacked: true, slot: 62.5 },
];

function SystemTray() {
  return (
    <Tray>
      <svg width="29" height="20" viewBox="0 0 29 20">
        <defs>
          <linearGradient id="cloud" x1="0" y1="0" x2="1" y2="1">
            <stop offset="0" stopColor="#f8fbff" />
            <stop offset="1" stopColor="#a9c3ee" />
          </linearGradient>
        </defs>
        <path d="M6 18.500A5.500 5.500 0 0 1 5.500 8A8.500 8.500 0 0 1 21.500 6A6.400 6.400 0 0 1 22.500 18.500Z" fill="url(#cloud)" />
      </svg>
      <Label w={38} size={17.5}>27°C</Label>
      <svg width="36" height="10" viewBox="0 0 36 10" fill="none" stroke="#fff" strokeWidth="1.400">
        <path d="M10.500 9L18 1.500L25.500 9" />
      </svg>
      <svg width="22" height="22" viewBox="0 0 22 22" fill="none" stroke="#fff" strokeWidth="1.200">
        <path d="M1.500 4L20 1.500V14M1.500 4V18.500L11 20.500" />
        <path d="M6.500 9Q9 5 13 7.500M13.500 4.500V8H10.500M13 11H8V15.500M8 11L12 15" />
        <circle cx="16.500" cy="17" r="4.500" fill="#2672c4" stroke="none" />
      </svg>
      <svg width="22" height="16" viewBox="0 0 22 16" fill="none" stroke="#fff" strokeWidth="1.200">
        <path d="M7 4H19V14H4V9M19 6.500H20.500V11.500H19" />
        <path d="M7.500 5.800H17.200V12.200H5.800V9H7.500Z" fill="#fff" stroke="none" />
        <path d="M2 0V3M5 0V3M1 3H6V5Q6 7 3.500 7Q1 7 1 5ZM3.500 7V9H6" />
      </svg>
      <svg width="18" height="18" viewBox="0 0 18 18" fill="none" strokeWidth="1.300">
        <path d="M1.500 16A14 14 0 0 1 16 2.500" stroke="#888" />
        <path d="M5 16.500A11 11 0 0 1 16 6.200M9 16.500A7.500 7.500 0 0 1 16 10" stroke="#fff" />
        <circle cx="14.500" cy="15" r="1.900" fill="#fff" />
      </svg>
      <svg width="22" height="18" viewBox="0 0 22 18" fill="none" stroke="#fff" strokeWidth="1.200">
        <path d="M1 6.500H4L8 2.500V15.500L4 11.500H1Z" />
        <path d="M10.500 7Q11.800 9 10.500 11M13.500 4.500Q16.200 9 13.500 13.500" />
        <path d="M16.500 2.500Q20.500 9 16.500 15.500" stroke="#777" />
      </svg>
      <Label w={29} size={14.5}>ENG</Label>
      <Clock>
        <Label w={52} size={14.2}>8:00 PM</Label>
        <Label w={60} size={14.2}>8/1/2022</Label>
      </Clock>
      <Notice>
        <svg width="34" height="34" viewBox="0 0 34 34">
          <path d="M1 2.500H21V18.500H11L6 23V18.500H1Z" fill="#fff" />
          <path d="M4.500 7H17.500M4.500 10.800H17.500M4.500 14.500H12" stroke="#101010" strokeWidth="1.300" />
          <circle cx="20.500" cy="21.500" r="10" fill="#2d2d2d" stroke="#777" strokeWidth="1" />
          <text x="20.500" y="27" fill="#fff" fontFamily="Open Sans" fontSize="14.500" textAnchor="middle">1</text>
        </svg>
      </Notice>
      <ShowDesktop />
    </Tray>
  );
}

function WindowsTaskbar() {
  return (
    <Taskbar>
      <StartButton>
        <svg width="20" height="20" viewBox="0 0 20 20" fill="#fff">
          <path d="M0 2.800L8.200 1.700V9.500H0ZM9.200 1.500L20 0V9.500H9.200ZM0 10.500H8.200V18.300L0 17.200ZM9.200 10.500H20V20L9.200 18.500Z" />
        </svg>
      </StartButton>
      <SearchBox>
        <svg width="21" height="21" viewBox="0 0 21 21" fill="none" stroke="#e4e4e4" strokeWidth="1.400">
          <circle cx="13" cy="7.500" r="6.500" />
          <path d="M8.500 12.300L0.700 20.300" />
        </svg>
        <Label w={164} size={17.8} color="#d2d2d2">Type here to search</Label>
        <SearchArt>
          <Lava />
        </SearchArt>
      </SearchBox>
      {apps.map((a, i) => (
        <TaskButton key={i} $open={a.open} $stacked={a.stacked} $slot={a.slot}>
          {a.icon}
        </TaskButton>
      ))}
      <TaskButton $active $slot={61}>
        <Chrome dark />
      </TaskButton>
      <SystemTray />
    </Taskbar>
  );
}

export default function App() {
  return (
    <Screen>
      <GlobalStyle />
      <Tabs />
      <AddressBar />
      <Bookmarks />
      <WebPage />
      <WindowsTaskbar />
    </Screen>
  );
}
